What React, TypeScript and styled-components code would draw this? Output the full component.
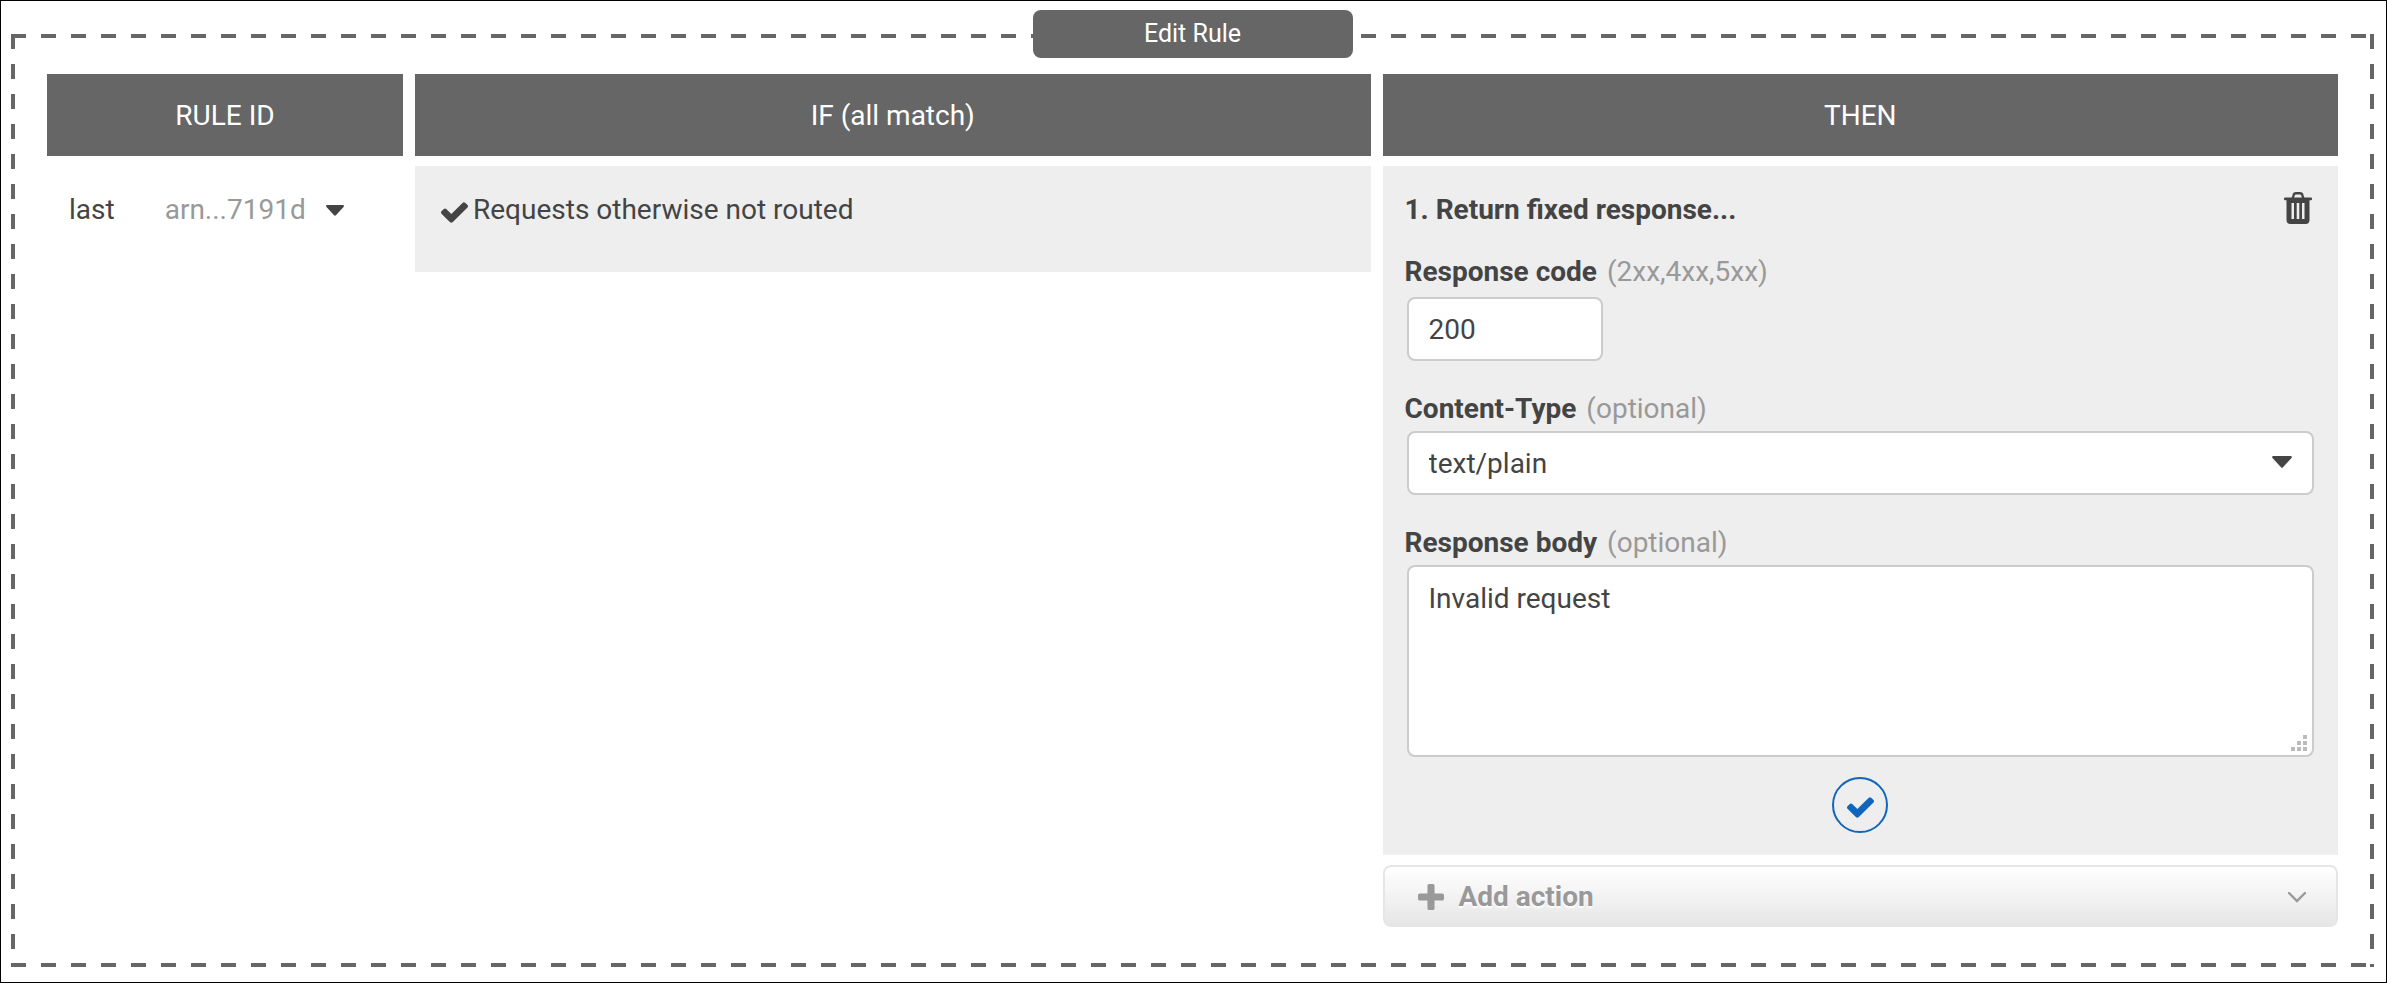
import React, { useState } from "react";
import styled, { createGlobalStyle } from "styled-components";

const GlobalStyle = createGlobalStyle`
  *, *::before, *::after { box-sizing: border-box; }
  body {
    margin: 0;
    background: #fff;
    color: #444;
    font-family: Roboto, "Liberation Sans", sans-serif;
    font-size: 28px;
    line-height: 40px;
  }
  button, input, select, textarea { font: inherit; color: inherit; }
`;

const dash = (direction: string) =>
  `repeating-linear-gradient(${direction}, #666 0 15px, transparent 15px 30px)`;

const Page = styled.div`
  border: 1px solid #000;
  padding: 33px 12px 15px 10px;
`;

const DashedFrame = styled.main`
  display: flow-root;
  padding: 0 36px 40px;
  background:
    ${dash("to right")} top / 100% 4px no-repeat,
    ${dash("to right")} bottom / 100% 4px no-repeat,
    ${dash("to bottom")} left / 4px 100% no-repeat,
    ${dash("to bottom")} right / 4px 100% no-repeat;
`;

const FrameTitle = styled.h1`
  width: 320px;
  margin: -24px auto 16px;
  border-radius: 8px;
  background: #666;
  color: #fff;
  font-size: 25px;
  font-weight: 400;
  line-height: 48px;
  text-align: center;
`;

const RuleTable = styled.table`
  display: grid;
  grid-template-columns: 356px 1fr 1fr;
  gap: 10px 12px;
  align-items: start;

  thead, tbody, tr { display: contents; }
`;

const ColumnHeader = styled.th`
  padding: 22px 20px 20px;
  background: #666;
  color: #fff;
  font-weight: 400;
`;

const IdCell = styled.td`
  display: flex;
  gap: 50px;
  padding: 24px 22px;
`;

const ArnButton = styled.button`
  display: flex;
  align-items: center;
  gap: 20px;
  padding: 0;
  border: 0;
  background: none;
  color: #999;
`;

const ConditionCell = styled.td`
  display: flex;
  align-items: center;
  gap: 5px;
  height: 106px;
  padding: 24px 26px 42px;
  background: #eee;

  svg { margin-top: 4px; }
`;

const ActionsCell = styled.td`
  display: flex;
  flex-direction: column;
  gap: 10px;
  padding: 0;
`;

const ActionCard = styled.section`
  padding: 24px 24px 22px;
  background: #eee;
`;

const CardHeader = styled.header`
  display: flex;
  align-items: center;
  justify-content: space-between;
  margin-bottom: 22px;
`;

const CardTitle = styled.h2`
  margin: 0 -2px;
  font-size: 28px;
  font-weight: 700;
`;

const IconButton = styled.button`
  display: flex;
  padding: 0 2px 4px;
  border: 0;
  background: none;
`;

const Field = styled.div<{ $gap?: number }>`
  display: flex;
  flex-direction: column;
  gap: ${({ $gap = 2 }) => $gap}px;
  margin-bottom: 28px;
  &:last-of-type { margin-bottom: 20px; }
`;

const FieldLabel = styled.label`
  margin: 0 -2px;
  font-weight: 700;
`;

const Hint = styled.span`
  margin-left: 10px;
  color: #999;
  font-weight: 400;
`;

const controlStyle = `
  width: 100%;
  border: 2px solid #ccc;
  border-radius: 8px;
  background: #fff;
  outline: none;
`;

const CodeInput = styled.input`
  ${controlStyle}
  width: 196px;
  height: 64px;
  padding: 0 20px;
`;

const ControlWrap = styled.span`
  position: relative;
  display: flex;
`;

const TypeSelect = styled.select`
  ${controlStyle}
  height: 64px;
  padding: 2px 20px 0;
  appearance: none;
`;

const BodyInput = styled.textarea`
  ${controlStyle}
  height: 192px;
  padding: 12px 20px;
  resize: none;
`;

const SelectCaret = styled.svg`
  position: absolute;
  right: 22px;
  top: 25px;
  pointer-events: none;
`;

const ResizeGrip = styled.svg`
  position: absolute;
  right: 7px;
  bottom: 6px;
  pointer-events: none;
`;

const ConfirmButton = styled.button`
  display: flex;
  align-items: center;
  justify-content: center;
  width: 56px;
  height: 56px;
  margin: 0 auto;
  padding: 4px 0 0;
  border: 2px solid #16b;
  border-radius: 50%;
  background: none;
  color: #16b;
`;

const AddActionButton = styled.button`
  display: flex;
  align-items: center;
  gap: 15px;
  height: 62px;
  padding: 2px 30px 0 33px;
  border: 2px solid #e6e6e6;
  border-radius: 8px;
  background: linear-gradient(#fff, #e6e6e6);
  color: #999;
  font-weight: 700;
  text-shadow: 0 2px 2px #fff;
`;

const AddActionText = styled.span`
  flex: 1;
  text-align: left;
`;

const CheckIcon = () => (
  <svg width="27" height="21" viewBox="121 334 1550 1188" fill="currentColor" aria-hidden="true">
    <path d="M1671 566q0 40-28 68l-724 724-136 136q-28 28-68 28t-68-28l-136-136-362-362q-28-28-28-68t28-68l136-136q28-28 68-28t68 28l294 295 656-657q28-28 68-28t68 28l136 136q28 28 28 68z" />
  </svg>
);

const PlusIcon = () => (
  <svg width="26" height="26" viewBox="192 128 1408 1408" fill="currentColor" aria-hidden="true">
    <path d="M1600 736v192q0 40-28 68t-68 28h-416v416q0 40-28 68t-68 28h-192q-40 0-68-28t-28-68v-416h-416q-40 0-68-28t-28-68v-192q0-40 28-68t68-28h416v-416q0-40 28-68t68-28h192q40 0 68 28t28 68v416h416q40 0 68 28t28 68z" />
  </svg>
);

const TrashIcon = () => (
  <svg width="28" height="32" viewBox="0 0 28 32" fill="none" aria-hidden="true">
    <path d="M8.500 7L9.500 3.500Q10 1.300 12 1.300H16Q18 1.300 18.500 3.500L19.500 7" stroke="#444" strokeWidth="2.400" />
    <rect y="5.500" width="28" height="2.800" rx="1" fill="#444" />
    <path
      fillRule="evenodd"
      fill="#444"
      d="M2.500 8H25.500V28Q25.500 32 21.500 32H6.500Q2.500 32 2.500 28ZM7.500 11V27H10V11ZM12.700 11V27H15.300V11ZM18 11V27H20.500V11Z"
    />
  </svg>
);

const CARET_PATH = "M1 0H19Q20.500 0.500 19.500 2L11 11.300Q10 12.400 9 11.300L0.500 2Q-0.500 0.500 1 0Z";

export default function App() {
  const [code, setCode] = useState("200");
  const [contentType, setContentType] = useState("text/plain");
  const [body, setBody] = useState("Invalid request");

  return (
    <Page>
      <GlobalStyle />
      <DashedFrame>
        <FrameTitle>Edit Rule</FrameTitle>
        <RuleTable>
          <thead>
            <tr>
              <ColumnHeader scope="col">RULE ID</ColumnHeader>
              <ColumnHeader scope="col">IF (all match)</ColumnHeader>
              <ColumnHeader scope="col">THEN</ColumnHeader>
            </tr>
          </thead>
          <tbody>
            <tr>
              <IdCell>
                <span>last</span>
                <ArnButton type="button">
                  arn...7191d
                  <svg width="18" height="11" viewBox="0 0 20 12" fill="#444" aria-hidden="true">
                    <path d={CARET_PATH} />
                  </svg>
                </ArnButton>
              </IdCell>
              <ConditionCell>
                <CheckIcon />
                <span>Requests otherwise not routed</span>
              </ConditionCell>
              <ActionsCell>
                <ActionCard>
                  <CardHeader>
                    <CardTitle>1. Return fixed response...</CardTitle>
                    <IconButton type="button" aria-label="Delete action">
                      <TrashIcon />
                    </IconButton>
                  </CardHeader>
                  <Field $gap={5}>
                    <FieldLabel htmlFor="response-code">
                      Response code<Hint>(2xx,4xx,5xx)</Hint>
                    </FieldLabel>
                    <CodeInput
                      id="response-code"
                      value={code}
                      onChange={(e) => setCode(e.target.value)}
                    />
                  </Field>
                  <Field>
                    <FieldLabel htmlFor="content-type">
                      Content-Type<Hint>(optional)</Hint>
                    </FieldLabel>
                    <ControlWrap>
                      <TypeSelect
                        id="content-type"
                        value={contentType}
                        onChange={(e) => setContentType(e.target.value)}
                      >
                        <option>text/plain</option>
                      </TypeSelect>
                      <SelectCaret width="20" height="12" viewBox="0 0 20 12" fill="#444" aria-hidden="true">
                        <path d={CARET_PATH} />
                      </SelectCaret>
                    </ControlWrap>
                  </Field>
                  <Field>
                    <FieldLabel htmlFor="response-body">
                      Response body<Hint>(optional)</Hint>
                    </FieldLabel>
                    <ControlWrap>
                      <BodyInput
                        id="response-body"
                        spellCheck={false}
                        value={body}
                        onChange={(e) => setBody(e.target.value)}
                      />
                      <ResizeGrip width="16" height="16" viewBox="0 0 16 16" fill="#bbb" aria-hidden="true">
                        <path d="M12 0h4v4h-4zM6 6h4v4H6zM12 6h4v4h-4zM0 12h4v4H0zM6 12h4v4H6zM12 12h4v4h-4z" />
                      </ResizeGrip>
                    </ControlWrap>
                  </Field>
                  <ConfirmButton type="button" aria-label="Save action">
                    <CheckIcon />
                  </ConfirmButton>
                </ActionCard>
                <AddActionButton type="button">
                  <PlusIcon />
                  <AddActionText>Add action</AddActionText>
                  <svg width="18" height="11" viewBox="0 0 18 11" fill="none" stroke="#999" strokeWidth="2.400" aria-hidden="true">
                    <path d="M1 1L9 9L17 1" strokeLinecap="round" />
                  </svg>
                </AddActionButton>
              </ActionsCell>
            </tr>
          </tbody>
        </RuleTable>
      </DashedFrame>
    </Page>
  );
}
